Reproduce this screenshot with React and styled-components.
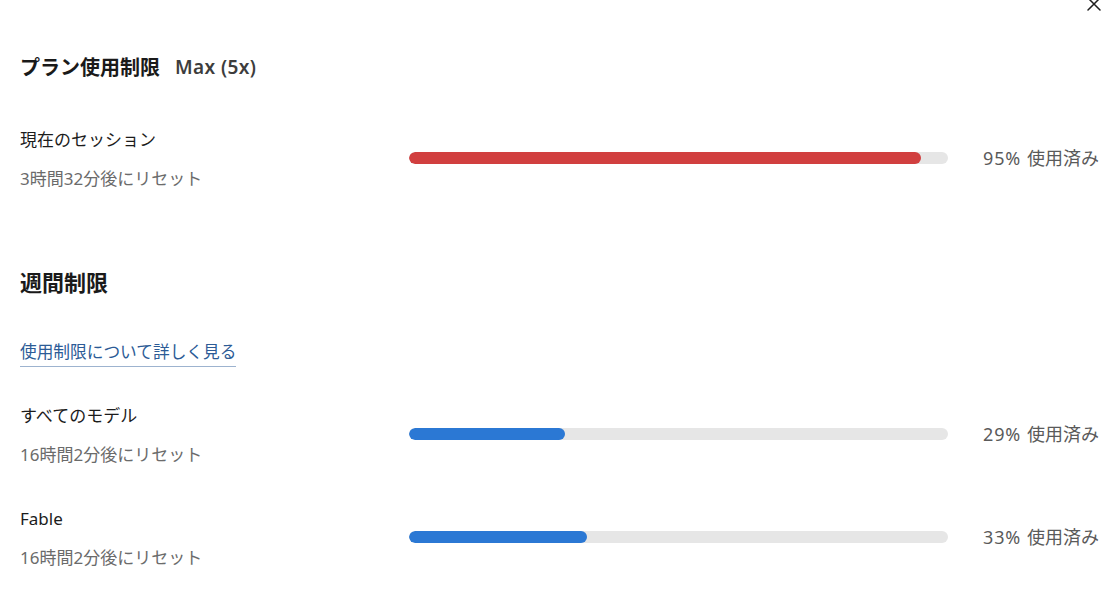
import React from 'react'
import styled, { createGlobalStyle } from 'styled-components'

const GlobalStyle = createGlobalStyle`
  html, body {
    margin: 0;
    padding: 0;
    background: #ffffff;
  }
  body {
    font-family: "Noto Sans", "Noto Sans CJK JP", sans-serif;
    color: #1f1f1f;
  }
`

const usage = {
  plan: 'Max (5x)',
  session: { name: '現在のセッション', reset: '3時間32分後にリセット', percent: 95 },
  weekly: [
    { name: 'すべてのモデル', reset: '16時間2分後にリセット', percent: 29 },
    { name: 'Fable', reset: '16時間2分後にリセット', percent: 33 },
  ],
}

export default function App() {
  return (
    <>
      <GlobalStyle />
      <Panel>
        <CloseButton aria-label="閉じる">
          <svg width="14" height="14" viewBox="0 0 14 14" fill="none">
            <path d="M1 1L13 13M13 1L1 13" stroke="#1f1f1f" strokeWidth="1.5" strokeLinecap="round" />
          </svg>
        </CloseButton>

        <Heading $size={20}>
          プラン使用制限<PlanName>{usage.plan}</PlanName>
        </Heading>
        <UsageRow item={usage.session} danger />

        <Heading $size={22} $spaced>週間制限</Heading>
        <LearnMore href="#">使用制限について詳しく見る</LearnMore>

        <RowList>
          {usage.weekly.map((item) => (
            <UsageRow key={item.name} item={item} />
          ))}
        </RowList>
      </Panel>
    </>
  )
}

function UsageRow({ item, danger = false }) {
  return (
    <Row>
      <Label>
        <Name>{item.name}</Name>
        <Reset>{item.reset}</Reset>
      </Label>
      <Track>
        <Fill $danger={danger} style={{ width: `${item.percent}%` }} />
      </Track>
      <Percent>
        <PercentValue>{item.percent}%</PercentValue>
        <span>使用済み</span>
      </Percent>
    </Row>
  )
}

const Panel = styled.div`
  position: relative;
  width: 1120px;
  height: 606px;
  box-sizing: border-box;
  padding: 53px 21px 0 20px;
  overflow: hidden;
`

const CloseButton = styled.button`
  position: absolute;
  top: -3px;
  right: 19px;
  width: 14px;
  height: 14px;
  padding: 0;
  border: 0;
  background: none;
  display: flex;
  cursor: pointer;
`

const Heading = styled.h2`
  display: flex;
  align-items: center;
  margin: ${(p) => (p.$spaced ? '75px 0 0' : '0')};
  font-family: "Noto Sans CJK JP", sans-serif;
  font-size: ${(p) => p.$size}px;
  line-height: 28px;
  font-weight: 700;
  color: #1a1a1a;
`

const PlanName = styled.span`
  margin-left: 15px;
  font-family: "Noto Sans", "Noto Sans CJK JP", sans-serif;
  font-size: 19px;
  letter-spacing: 0.4px;
  font-weight: 600;
  color: #3d3d3d;
`

const LearnMore = styled.a`
  display: inline-block;
  margin-top: 45px;
  font-size: 16.7px;
  line-height: 24px;
  padding-bottom: 2px;
  color: #2c5b96;
  text-decoration: none;
  border-bottom: 1px solid #9db3cf;
`

const RowList = styled.div`
  display: flex;
  flex-direction: column;
  gap: 38px;
  margin-top: 36px;
`

const Row = styled.div`
  display: flex;
  align-items: center;
  margin-top: 46px;

  ${RowList} & {
    margin-top: 0;
  }
`

const Label = styled.div`
  width: 389px;
  flex-shrink: 0;
  display: flex;
  flex-direction: column;
  gap: 13px;
`

const Name = styled.div`
  font-size: 17px;
  line-height: 26px;
  color: #1c1c1c;
`

const Reset = styled.div`
  font-size: 17px;
  line-height: 26px;
  color: #6b6b6b;
`

const Track = styled.div`
  flex: 1;
  height: 12px;
  margin-top: -4px;
  border-radius: 6px;
  background: #e6e6e6;
  overflow: hidden;
`

const Fill = styled.div`
  height: 100%;
  border-radius: 6px;
  background: ${(p) => (p.$danger ? '#d13f3f' : '#2b78d4')};
`

const Percent = styled.div`
  width: 121px;
  margin-left: 30px;
  margin-top: -4px;
  display: flex;
  justify-content: flex-end;
  gap: 6px;
  white-space: nowrap;
  font-size: 18px;
  line-height: 26px;
  color: #5a5a5a;
`

const PercentValue = styled.span`
  letter-spacing: 0.8px;
`
